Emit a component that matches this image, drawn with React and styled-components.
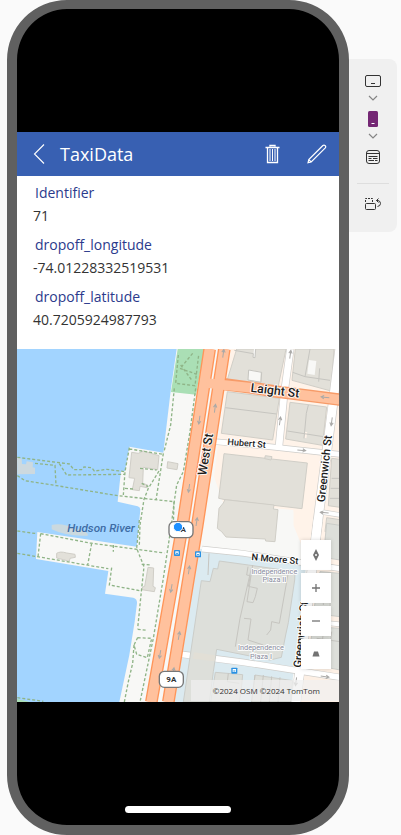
import React from "react";
import styled, { createGlobalStyle } from "styled-components";

const GlobalStyle = createGlobalStyle`
  *, *::before, *::after { box-sizing: border-box; }
  body {
    margin: 0;
    background: #fafafa;
    font-family: "Open Sans", "Noto Sans", sans-serif;
  }
`;

const Page = styled.main`
  display: flex;
  align-items: flex-start;
  min-height: 100vh;
  padding: 0 4px 0 7px;
`;

const Phone = styled.section`
  flex: 1;
  min-width: 0;
  min-height: 100vh;
  display: flex;
  flex-direction: column;
  border: 10px solid #606060;
  border-top-width: 9px;
  border-radius: 60px;
  background: #000;
`;

const Bezel = styled.div`
  flex: 1 0 80px;
  display: flex;
  align-items: flex-end;
  justify-content: center;
  padding-bottom: 12px;
`;

const HomeBar = styled.div`
  width: 106px;
  height: 7px;
  border-radius: 4px;
  background: #fff;
`;

const AppHeader = styled.header`
  display: flex;
  align-items: center;
  height: 44px;
  padding: 0 8px;
  background: #3860b2;
  color: #fff;
`;

const HeaderButton = styled.button`
  display: grid;
  place-items: center;
  width: 28px;
  height: 44px;
  padding: 0;
  border: 0;
  background: none;
  color: inherit;
`;

const HeaderActions = styled.div`
  display: flex;
  gap: 16px;
  margin-left: auto;
`;

const Title = styled.h1`
  margin: 0 0 0 7px;
  font-size: 18px;
  line-height: 24px;
  font-weight: 400;
`;

const Details = styled.dl`
  display: flex;
  flex-direction: column;
  gap: 8px;
  margin: 0;
  padding: 6px 16px 19px;
  background: #fff;
`;

const Field = styled.div`
  display: flex;
  flex-direction: column;
  gap: 2px;
`;

const FieldLabel = styled.dt`
  padding-left: 2px;
  font-size: 14px;
  line-height: 21px;
  color: #2b3a8c;
`;

const FieldValue = styled.dd`
  margin: 0;
  font-size: 14px;
  line-height: 21px;
  color: #333;
`;

const MapPanel = styled.div`
  position: relative;
  background: #a2d4ff;
`;

const MapDrawing = styled.svg`
  display: block;
  width: 100%;
  height: 353px;
`;

const MapControls = styled.div`
  position: absolute;
  right: 8px;
  bottom: 33px;
  display: flex;
  flex-direction: column;
  gap: 3px;
`;

const MapButton = styled.button`
  display: grid;
  place-items: center;
  width: 30px;
  height: 30px;
  padding: 0;
  border: 0;
  background: #fff;
  color: #737373;
  box-shadow: 0 0 4px rgba(0, 0, 0, 0.16);
`;

const Attribution = styled.div`
  position: absolute;
  right: 0;
  bottom: 1px;
  padding: 0 19px 0 22px;
  background: rgba(240, 240, 240, 0.72);
  font-size: 8px;
  line-height: 21px;
  color: #333;
  white-space: nowrap;
`;

const Toolbar = styled.aside`
  display: flex;
  flex-direction: column;
  align-items: center;
  width: 48px;
  margin-top: 59px;
  padding: 12px 8px 18px;
  border-radius: 0 8px 8px 0;
  background: #f0f0f0;
`;

const ToolButton = styled.button`
  display: grid;
  place-items: center;
  width: 32px;
  height: ${(p) => (p.$small ? 14 : 20)}px;
  margin: 0 0 ${(p) => p.$gap || 0}px;
  padding: 0;
  border: 0;
  background: none;
  color: ${(p) => (p.$small ? "#858585" : "#333")};
`;

const Divider = styled.hr`
  width: 32px;
  height: 1px;
  margin: 0 0 10px;
  border: 0;
  background: #dedede;
`;

const StreetName = styled.text`
  font-family: Roboto, sans-serif;
  font-size: ${(p) => p.$size}px;
  font-weight: ${(p) => p.$weight || 400};
  font-style: ${(p) => (p.$italic ? "italic" : "normal")};
  fill: ${(p) => p.$color || "#1c1c1c"};
  stroke: ${(p) => p.$halo || "rgba(255,255,255,0.85)"};
  stroke-width: 6px;
  stroke-linejoin: round;
  paint-order: stroke;
  text-anchor: middle;
  dominant-baseline: central;
`;

const ShieldText = styled.text`
  font-family: Roboto, sans-serif;
  font-size: 24px;
  font-weight: 700;
  fill: #333;
  text-anchor: middle;
  dominant-baseline: central;
`;

const westShore =
  "M500 12 L483 130 460 323 358 305 345 378 333 378 323 470 383 484 Q391 486 391 494 L380 605 82 561 78 642 295 678 285 746 370 758 Q382 762 381 775 L374 830 358 930 328 1071 H990 V12Z";

const avenues = ["M599 12 L518 540 424 1071", "M643 12 L562 540 475 1071"];

const sideStreets = [
  { d: "M617 290 L760 303 990 328", w: 15 },
  { d: "M841 12 L822 150 807 303", w: 20 },
  { d: "M989 12 L967 190 924 525 858 1071", w: 26 },
  { d: "M576 612 L700 625 990 671", w: 15 },
  { d: "M930 500 L990 510", w: 12 },
  { d: "M940 833 L990 838", w: 12 },
];

const northBlocks = [
  "M200 12 L348 12 322 137 172 104Z",
  "M376 12 L492 12 483 138 366 106Z",
  "M172 140 L328 160 308 285 154 265Z",
  "M360 172 L470 186 457 301 347 282Z",
  "M162 326 L412 354 396 491 165 464 146 460Z",
  "M165 464 L312 480 310 492 324 494 315 590 287 588 286 582 168 576 155 560 142 550 147 490 160 474Z",
  "M485 340 L510 343 V487 L475 482Z",
  "M470 518 L510 524 V560 H465Z",
  "M286 332 L306 335 303 345 284 341Z",
];

const southBlocks = [
  "M148 123 L235 135 375 155 374 180 355 308 347 345 334 412 300 420 140 388 130 455 118 546 40 546 94 182 120 185 130 145 143 147Z",
  "M136 457 L218 464 215 497 208 546 122 546Z",
  "M255 465 L368 482 362 546 244 546Z",
  "M470 10 L510 16 V120 L460 112Z",
  "M450 155 L510 160 V290 L430 280Z",
  "M430 320 L510 325 V450 L410 430Z",
];

const parcelLines = [
  "M737 12 L735 38 729 37 730 26 673 16 M716 75 L714 105 753 112 755 82Z M900 12 L885 95 848 82 M885 95 L960 106 M929 70 L926 110",
  "M646 188 L800 207 M889 205 L882 280 M832 258 L940 275 M889 205 L895 180",
  "M965 400 H990 M962 430 H990 M960 460 H990",
  "M714 665 L710 690 721 692 715 724 742 730 736 755 729 773 711 770 728 660 M835 682 L808 835 785 830 782 855 770 870 M702 820 L723 822 714 885 760 900 M724 670 L690 820 676 905 M597 625 L594 690",
  "M735 990 L725 1071 M760 990 L752 1071 M785 994 L778 1071 M810 997 L804 1071 M655 985 L652 1010 688 1015 M940 700 V780 M960 705 V790 M920 880 L990 890 M940 860 L930 955 M965 860 L955 960",
];

const piers = [
  "M22 337 L140 352 178 357 192 374 215 374 222 366 245 368 253 378 290 373 345 380",
  "M75 355 L135 361 138 421 M148 356 L170 390 345 388",
  "M22 392 L45 407 140 422 323 452 492 470 M492 470 L490 540",
  "M345 430 L370 432 M358 308 L345 380 340 450 M358 312 L460 328 M460 325 L438 465 M390 370 L440 375 M447 378 L415 430 402 463 390 540 388 600 M395 415 L415 425",
  "M493 130 L482 240 462 320 M557 130 L540 260 520 380 500 420 492 475 484 540 460 700 430 880 390 1071",
  "M22 558 L80 566 M92 566 L240 594 463 624 M22 625 L82 635 295 671 M92 566 L84 635 M245 595 L233 660 M305 668 L298 720 395 738 M310 600 V620 M388 525 L380 610 402 665 394 740 383 850",
  "M383 853 L412 856 M383 878 L425 880 412 938 380 928 372 900 383 878 M372 900 L368 955 355 1010 343 1071 M395 658 L425 660 M22 1058 L100 1069",
  "M505 30 L497 115 555 122 566 30 M510 70 L560 88 M548 25 L515 65 M512 60 L545 105",
];

const arrows = [
  [640, 25, 8], [615, 190, 8], [568, 225, 188], [537, 430, 188], [810, 228, 8], [841, 28, 8],
  [965, 230, 188], [945, 157, 276], [875, 316, 96], [943, 503, 276], [537, 675, 8], [484, 730, 190],
  [450, 928, 190], [507, 872, 10], [490, 980, 10], [560, 530, 8], [945, 995, 98], [858, 1010, 188],
];

function CityMap() {
  return (
    <MapDrawing viewBox="0 0 966 1059" preserveAspectRatio="xMidYMid slice" role="img" aria-label="Street map">
      <g transform="translate(-21 -12)">
        <path d="M125 540 Q155 532 200 552 Q240 562 233 572 Q170 575 125 553Z" fill="#cbd9df" />
        <path d={westShore} fill="#f8f8f6" />
        <path d="M503 12 H583 L558 149 483 141Z" fill="#aadfb5" />
        <path d="M21 1062 L60 1071 H21Z" fill="#aadfb5" />
        <path d="M660 12 H990 V700 H915 L850 540 V500 L640 475 612 395Z" fill="#fff3e9" />
        <path d="M640 475 L850 495 V615 L585 600Z" fill="#f8f8f6" />
        <path d="M560 610 L888 660 840 1071 H490Z" fill="#dbeaf0" />
        <path d="M900 660 H990 V1071 H860Z" fill="#fdf0e5" />
        <path d="M21 337 L35 341 36 357 48 358 50 349 69 352 68 367 75 368 75 387 22 388Z" fill="#cdd9df" />

        <g fill="#e2e0d9" stroke="#d0cec7" strokeWidth="3">
          <path d="M365 322 L385 325 400 318 447 332 443 374 400 367 398 415 413 420 411 428 390 424 388 437 367 434 374 400 357 398Z" />
          <path d="M473 350 L504 356 501 374 471 369Z" />
          <path d="M140 625 Q150 618 170 624 L195 628 196 637 180 640 178 649 160 644 140 639Z" />
          <path d="M414 667 L431 669 429 724 436 728 433 740 395 734 398 726 404 724Z" />
          <g transform="translate(480 0)">
            {northBlocks.map((d) => <path key={d} d={d} />)}
          </g>
        </g>
        <path d="M897 45 L919 48 914 90 892 86Z M716 75 L752 80 750 110 714 105Z M737 12 L735 38 729 37 732 12Z" fill="#f8f8f6" />
        <path d="M885 260 L892 262 889 280 882 278Z" fill="#fff3e9" />

        <g fill="none">
          {sideStreets.map((s) => <path key={s.d} d={s.d} stroke="#cecdca" strokeWidth={s.w + 4} />)}
          <path d="M515 928 L700 952 990 997" stroke="#cecdca" strokeWidth="21" />
          {sideStreets.map((s) => <path key={s.d} d={s.d} stroke="#fff" strokeWidth={s.w} />)}
          <path d="M515 928 L700 952 990 997" stroke="#fff" strokeWidth="17" />
        </g>
        <g fill="#dddfda" stroke="#cbcdc9" strokeWidth="3" transform="translate(480 525)">
          {southBlocks.map((d) => <path key={d} d={d} />)}
        </g>
        <path d="M552 922 L616 931 613 949 548 941Z" fill="#e2dfd6" />
        <g fill="none" stroke="#c6c5c0" strokeWidth="3">
          {parcelLines.map((d) => <path key={d} d={d} />)}
        </g>
        <path d="M924 525 L858 1071" stroke="#fff" strokeWidth="26" />

        <g fill="none" stroke="#8fb487" strokeWidth="4" strokeDasharray="9 6">
          {piers.map((d) => <path key={d} d={d} />)}
        </g>

        <g fill="none">
          <path d="M630 116 L730 129 800 140 990 164" stroke="#f79b68" strokeWidth="37" />
          {avenues.map((d) => <path key={d} d={d} stroke="#ff9559" strokeWidth="38" />)}
          {avenues.map((d) => <path key={d} d={d} stroke="#ffc19d" strokeWidth="30" />)}
          <path d="M590 114 L630 119 730 129 800 140 990 164" stroke="#ffc19d" strokeWidth="29" />
        </g>

        <g fill="none" stroke="#aaa9a7" strokeWidth="3">
          {arrows.map(([x, y, a]) => (
            <path key={`${x}-${y}`} transform={`translate(${x} ${y}) rotate(${a})`} d="M0 13 V-12 M-5 -3 L0 -12 5 -3" />
          ))}
        </g>

        <StreetName $size={35} $weight={500} $italic $color="#3e6ca5" $halo="none" transform="translate(273 550)">
          Hudson River
        </StreetName>
        <StreetName $size={37} $weight={500} transform="translate(795 137) rotate(7)">Laight St</StreetName>
        <StreetName $size={27} $weight={500} transform="translate(710 295) rotate(5)">Hubert St</StreetName>
        <StreetName $size={37} $weight={500} transform="translate(587 328) rotate(-80)">West St</StreetName>
        <StreetName $size={34} $weight={500} transform="translate(943 371) rotate(-84)">Greenwich St</StreetName>
        <StreetName $size={28} $weight={500} transform="translate(795 641) rotate(5)">N Moore St</StreetName>
        <StreetName $size={34} $weight={500} transform="translate(872 868) rotate(-84)">Greenwich St</StreetName>
        <StreetName $size={22} $color="#8a8d9f" transform="translate(793 679)">Independence</StreetName>
        <StreetName $size={22} $color="#8a8d9f" transform="translate(793 704)">Plaza II</StreetName>
        <StreetName $size={22} $color="#8a8d9f" transform="translate(753 908)">Independence</StreetName>
        <StreetName $size={22} $color="#8a8d9f" transform="translate(753 933)">Plaza I</StreetName>

        {[[501, 624], [564, 628], [673, 977]].map(([x, y]) => (
          <g key={x} transform={`translate(${x} ${y})`}>
            <rect x="-9" y="-9" width="18" height="18" rx="2" fill="#2b91e2" />
            <path d="M-5 -5 H5 V4 H-5Z" fill="#fff" />
            <path d="M-3 1 H3" stroke="#2b91e2" strokeWidth="3" />
          </g>
        ))}

        {[[513, 554], [484, 1003]].map(([x, y]) => (
          <g key={x} transform={`translate(${x} ${y})`}>
            <rect x="-36" y="-24" width="72" height="48" rx="15" fill="#fff" stroke="#777" strokeWidth="4" />
            <ShieldText>9A</ShieldText>
          </g>
        ))}
        <circle cx="504" cy="546" r="14" fill="#1e90ff" stroke="#fff" strokeWidth="3" />
      </g>
    </MapDrawing>
  );
}

const fields = [
  { label: "Identifier", value: "71" },
  { label: "dropoff_longitude", value: "-74.01228332519531" },
  { label: "dropoff_latitude", value: "40.7205924987793" },
];

function ChevronDown() {
  return (
    <svg width="10" height="6" viewBox="0 0 10 6" fill="none" stroke="currentColor" strokeWidth="1.2">
      <path d="M1 1 L5 5 9 1" />
    </svg>
  );
}

export default function App() {
  return (
    <>
      <GlobalStyle />
      <Page>
        <Phone>
          <Bezel />
          <AppHeader>
            <HeaderButton aria-label="Back">
              <svg width="12" height="20" viewBox="0 0 12 20" fill="none" stroke="currentColor" strokeWidth="1.1">
                <path d="M11 0.5 L1.5 10 11 19.5" />
              </svg>
            </HeaderButton>
            <Title>TaxiData</Title>
            <HeaderActions>
              <HeaderButton aria-label="Delete">
                <svg width="16" height="20" viewBox="0 0 16 20" fill="none" stroke="currentColor">
                  <path d="M0.5 3.5 H14.5 M5 2.5 V1.5 H10 V2.5" strokeWidth="1.4" />
                  <path d="M2.5 4 V18.5 H12.5 V4" strokeWidth="1.3" />
                  <path d="M5 5 V17 M7.5 5 V17 M10 5 V17" />
                </svg>
              </HeaderButton>
              <HeaderButton aria-label="Edit">
                <svg width="20" height="20" viewBox="0 0 20 20" fill="none" stroke="currentColor" strokeWidth="1.2">
                  <path d="M1 18.8 L1.8 15.6 15.9 1.5 Q17 0.6 18.2 1.6 Q19.2 2.8 18.3 3.9 L4.2 18Z M1.8 15.6 L4.2 18" />
                </svg>
              </HeaderButton>
            </HeaderActions>
          </AppHeader>
          <Details>
            {fields.map((f) => (
              <Field key={f.label}>
                <FieldLabel>{f.label}</FieldLabel>
                <FieldValue>{f.value}</FieldValue>
              </Field>
            ))}
          </Details>
          <MapPanel>
            <CityMap />
            <MapControls>
              <MapButton aria-label="Reset rotation">
                <svg width="8" height="12" viewBox="0 0 8 12">
                  <path d="M4 0 L7 6 4 12 1 6Z" fill="currentColor" />
                  <circle cx="4" cy="6" r="1" fill="#fff" />
                </svg>
              </MapButton>
              <MapButton aria-label="Zoom in">
                <svg width="10" height="10" viewBox="0 0 10 10" stroke="currentColor" strokeWidth="1.3">
                  <path d="M5 1 V9 M1 5 H9" />
                </svg>
              </MapButton>
              <MapButton aria-label="Zoom out">
                <svg width="10" height="10" viewBox="0 0 10 10" stroke="currentColor" strokeWidth="1.3">
                  <path d="M1 5 H9" />
                </svg>
              </MapButton>
              <MapButton aria-label="Change pitch">
                <svg width="8" height="6" viewBox="0 0 8 6">
                  <path d="M2 0.5 H6 L7.5 5.5 H0.5Z" fill="currentColor" />
                </svg>
              </MapButton>
            </MapControls>
            <Attribution>©2024 OSM ©2024 TomTom</Attribution>
          </MapPanel>
          <Bezel>
            <HomeBar />
          </Bezel>
        </Phone>
        <Toolbar>
          <ToolButton aria-label="Tablet">
            <svg width="16" height="12" viewBox="0 0 16 12" fill="none" stroke="currentColor">
              <rect x="0.5" y="0.5" width="15" height="11" rx="1.5" />
              <path d="M6 8.5 H10" />
            </svg>
          </ToolButton>
          <ToolButton $small $gap={4} aria-label="Tablet sizes"><ChevronDown /></ToolButton>
          <ToolButton aria-label="Phone">
            <svg width="10" height="16" viewBox="0 0 10 16">
              <rect width="10" height="16" rx="1.5" fill="#742774" />
              <path d="M3.5 12.5 H6.5" stroke="#fff" />
            </svg>
          </ToolButton>
          <ToolButton $small $gap={4} aria-label="Phone sizes"><ChevronDown /></ToolButton>
          <ToolButton $gap={16} aria-label="Form">
            <svg width="14" height="14" viewBox="0 0 14 14" fill="none" stroke="currentColor">
              <rect x="0.5" y="0.5" width="13" height="13" rx="2.5" />
              <path d="M1 3.5 H13 M2.5 6.5 H11.5 M2.5 8.5 H5.5 M7 8.5 H11.5 M2.5 10.5 H8 M9 10.5 H11.5" />
            </svg>
          </ToolButton>
          <Divider />
          <ToolButton aria-label="Rotate">
            <svg width="16" height="14" viewBox="0 0 16 14" fill="none" stroke="currentColor">
              <rect x="0.5" y="6.5" width="10" height="6" rx="1" />
              <path d="M0.5 5 V1.5 H7.5 V5" strokeDasharray="2 1" />
              <path d="M11.5 3.5 H13 Q15.5 4 15.5 6.5 Q15.5 9 12.5 9.5 M13.5 1.5 L11.5 3.5 13.5 5.5" />
            </svg>
          </ToolButton>
        </Toolbar>
      </Page>
    </>
  );
}
